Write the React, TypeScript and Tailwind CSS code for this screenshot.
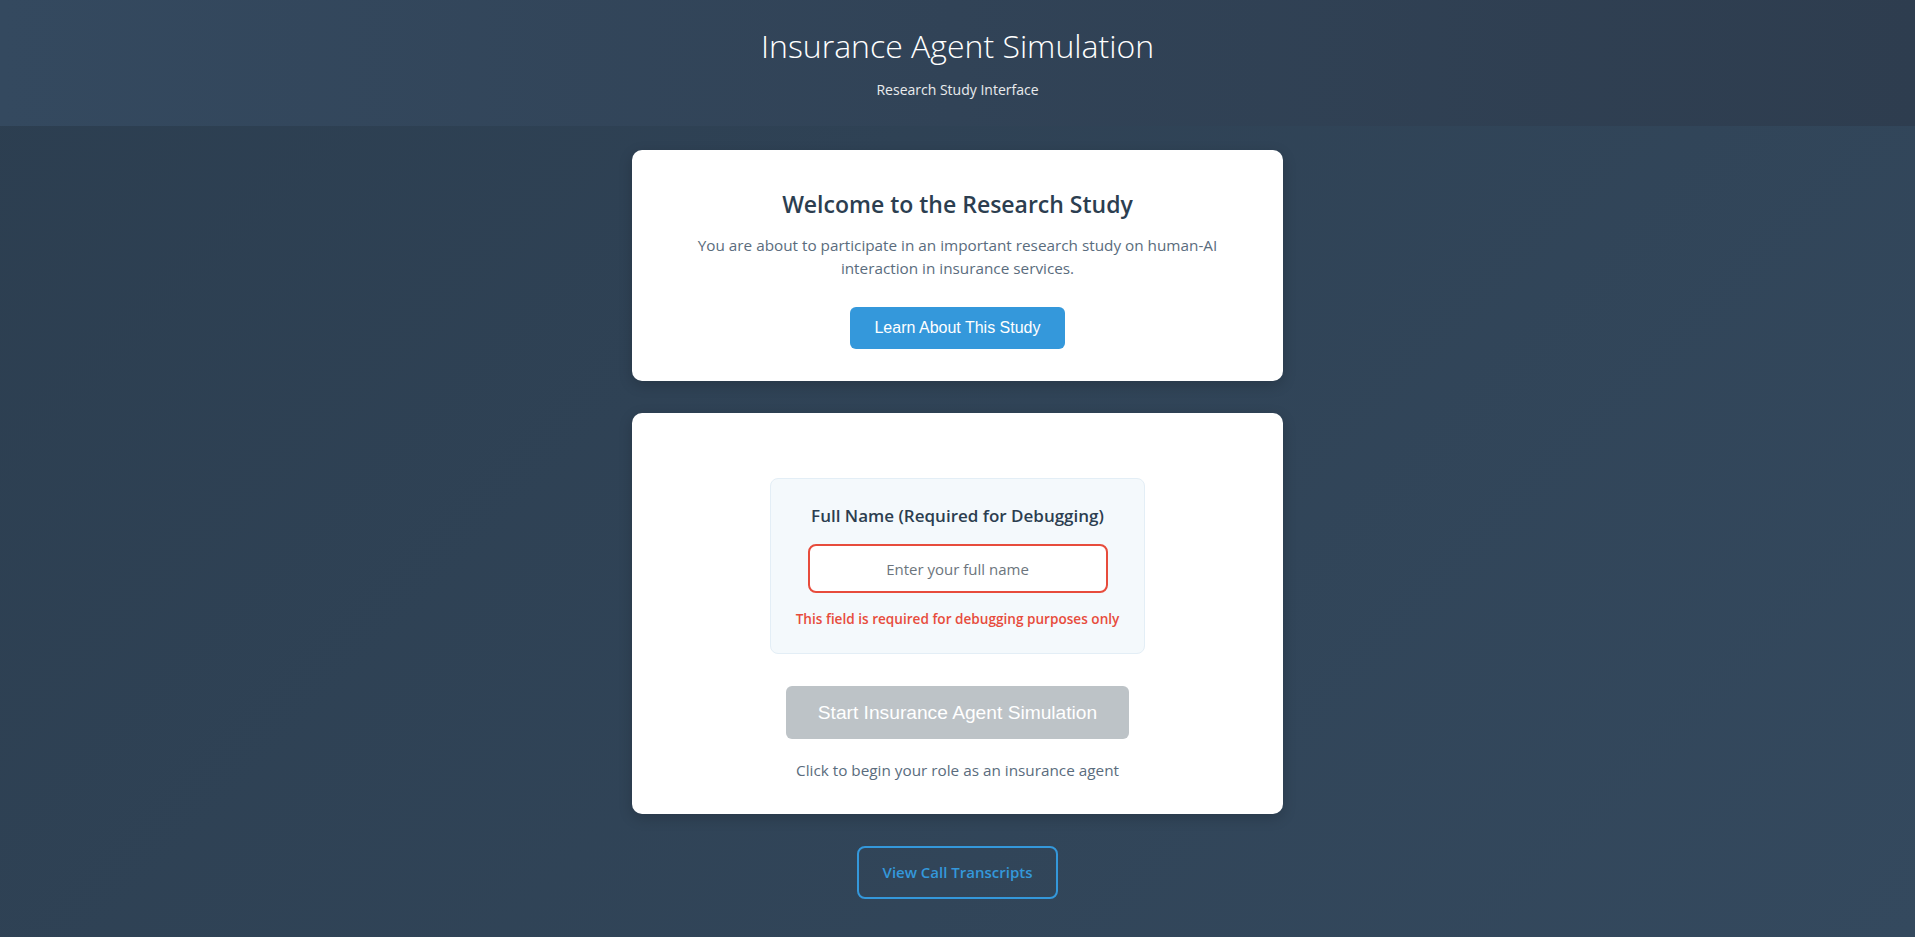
import { useState } from "react";

const SANS = "font-['Segoe_UI','Open_Sans','Noto_Sans',sans-serif]";
const ARIAL = "font-['Liberation_Sans',Arial,sans-serif]";

export default function App() {
  const [name, setName] = useState("");
  const missing = name.trim() === "";

  return (
    <div className={`min-h-screen bg-linear-135 from-[#2c3e50] to-[#34495e] ${SANS}`}>
      {/* Header */}
      <header className="h-[126px] flex flex-col items-center bg-linear-to-r from-[#34495f] to-[#2e3d4f] text-white">
        <h1 className="mt-[20px] text-[32px] leading-[52px] font-light">
          Insurance Agent Simulation
        </h1>
        <p className="mt-[6px] text-[14px] leading-6 text-white/90">Research Study Interface</p>
      </header>

      <main className="flex flex-col items-center pt-6 pb-10">
        {/* Welcome card */}
        <section className="w-[651px] rounded-[10px] bg-white shadow-[0_4px_14px_rgba(0,0,0,0.18)] px-8 pt-[38px] pb-8 flex flex-col items-center text-center">
          <h2 className="text-[23px] leading-8 font-semibold text-[#2c3e50] mb-[14px]">
            Welcome to the Research Study
          </h2>
          <p className="text-[15.3px] leading-[23px] text-[#5a6c7d] mb-[27px] whitespace-nowrap">
            You are about to participate in an important research study on human-AI
            <br />
            interaction in insurance services.
          </p>
          <button className={`${ARIAL} bg-[#3498db] hover:bg-[#2f89c5] text-white text-[16px] leading-[18px] rounded-[6px] px-6 py-3`}>
            Learn About This Study
          </button>
        </section>

        {/* Start card */}
        <section className="mt-8 w-[651px] rounded-[10px] bg-white shadow-[0_4px_14px_rgba(0,0,0,0.18)] px-8 pt-[65px] pb-8 flex flex-col items-center text-center">
          <div className="w-[375px] rounded-[8px] bg-[#f4f9fc] border border-[#e3eef6] px-6 pt-6 pb-6 flex flex-col items-center">
            <label htmlFor="fullName" className="text-[17px] leading-[26px] font-semibold text-[#2c3e50] mb-[15px]">
              Full Name (Required for Debugging)
            </label>
            <input
              id="fullName"
              value={name}
              onChange={(e) => setName(e.target.value)}
              placeholder="Enter your full name"
              className={`w-[300px] h-[49px] rounded-[8px] bg-white border-2 text-center text-[15px] text-[#2c3e50] placeholder:text-[#6c757d] outline-none ${
                missing ? "border-[#e74c3c]" : "border-[#3498db]"
              }`}
            />
            {missing && (
              <p className="mt-[15px] text-[13.6px] leading-[21px] font-semibold text-[#e74c3c]">
                This field is required for debugging purposes only
              </p>
            )}
          </div>

          <button
            disabled={missing}
            className={`${ARIAL} mt-8 rounded-[6px] px-8 py-4 text-[19.2px] leading-[21px] text-white ${
              missing ? "bg-[#bdc3c7] cursor-not-allowed" : "bg-[#27ae60]"
            }`}
          >
            Start Insurance Agent Simulation
          </button>
          <p className="mt-[19px] text-[15.3px] leading-6 text-[#5a6c7d]">
            Click to begin your role as an insurance agent
          </p>
        </section>

        {/* Transcripts */}
        <button className="mt-8 rounded-[8px] border-2 border-[#3498db] px-6 py-3 text-[15px] leading-[25px] font-semibold text-[#3498db] hover:bg-[#3498db]/10">
          View Call Transcripts
        </button>
      </main>
    </div>
  );
}
